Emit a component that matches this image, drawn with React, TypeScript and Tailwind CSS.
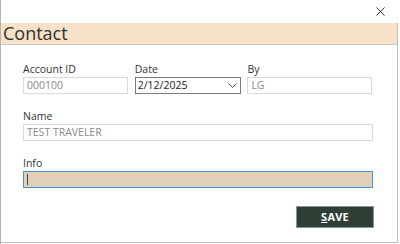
import React from "react";

const font = { fontFamily: '"Open Sans", "Noto Sans", sans-serif' };

function Field({ label, value, className }: { label: string; value: string; className?: string }) {
  return (
    <div className={className}>
      <div className="h-[15px] text-[10.5px] leading-[15px] text-[#333]">{label}</div>
      <div className="h-[17px] border border-[#d9d9d9] bg-white pl-[3px] text-[10.5px] leading-[15px] text-[#8a8a8a]">
        {value}
      </div>
    </div>
  );
}

export default function App() {
  return (
    <div className="w-[400px] h-[244px] bg-white border-l border-[#b4b4b4] overflow-hidden" style={font}>
      {/* title strip */}
      <div className="h-[23px] flex justify-end items-start pr-[15px] pt-[7px]">
        <svg width="9" height="9" viewBox="0 0 9 9">
          <path d="M0.5 0.5 L8.5 8.5 M8.5 0.5 L0.5 8.5" stroke="#333" strokeWidth="1" />
        </svg>
      </div>

      <div className="w-[397px] h-[220px] border-r border-b border-[#bdbdbd] flex flex-col">
        {/* header band */}
        <div className="h-[22px] bg-[#f7e2c9] border-b border-[#c9c9c9] pl-[2px] text-[18px] leading-[21px] text-[#2f2f2f]">
          Contact
        </div>

        <div className="pl-[22px] pr-[25px] pt-[17px]">
          {/* row 1 */}
          <div className="flex">
            <Field label="Account ID" value="000100" className="w-[105px]" />
            <div className="w-[107px] ml-[7px]">
              <div className="h-[15px] text-[10.5px] leading-[15px] text-[#333]">Date</div>
              <div className="h-[17px] border border-[#7a7a7a] bg-white pl-[2px] pr-[3px] flex items-center justify-between text-[10.5px] leading-[15px] text-[#222]">
                <span>2/12/2025</span>
                <svg width="9" height="6" viewBox="0 0 9 6">
                  <path d="M0.5 0.5 L4.5 4.5 L8.5 0.5" stroke="#555" strokeWidth="1" fill="none" />
                </svg>
              </div>
            </div>
            <Field label="By" value="LG" className="w-[125px] ml-[6px]" />
          </div>

          {/* row 2 */}
          <Field label="Name" value="TEST TRAVELER" className="w-[350px] mt-[15px]" />

          {/* row 3 */}
          <div className="w-[350px] mt-[15px]">
            <div className="h-[15px] text-[10.5px] leading-[15px] text-[#333]">Info</div>
            <div className="h-[17px] border border-[#4a90d6] bg-[#e1d0b8] pl-[3px] flex items-center">
              <div className="w-px h-[11px] bg-[#444]" />
            </div>
          </div>

          {/* actions */}
          <div className="flex justify-end w-[351px] mt-[18px]">
            <button className="w-[78px] h-[22px] bg-[#2f3f35] border border-[#8a9690] text-white text-[11px] font-bold leading-[20px] tracking-[0.2px]">
              <span className="underline">S</span>AVE
            </button>
          </div>
        </div>
      </div>
    </div>
  );
}
